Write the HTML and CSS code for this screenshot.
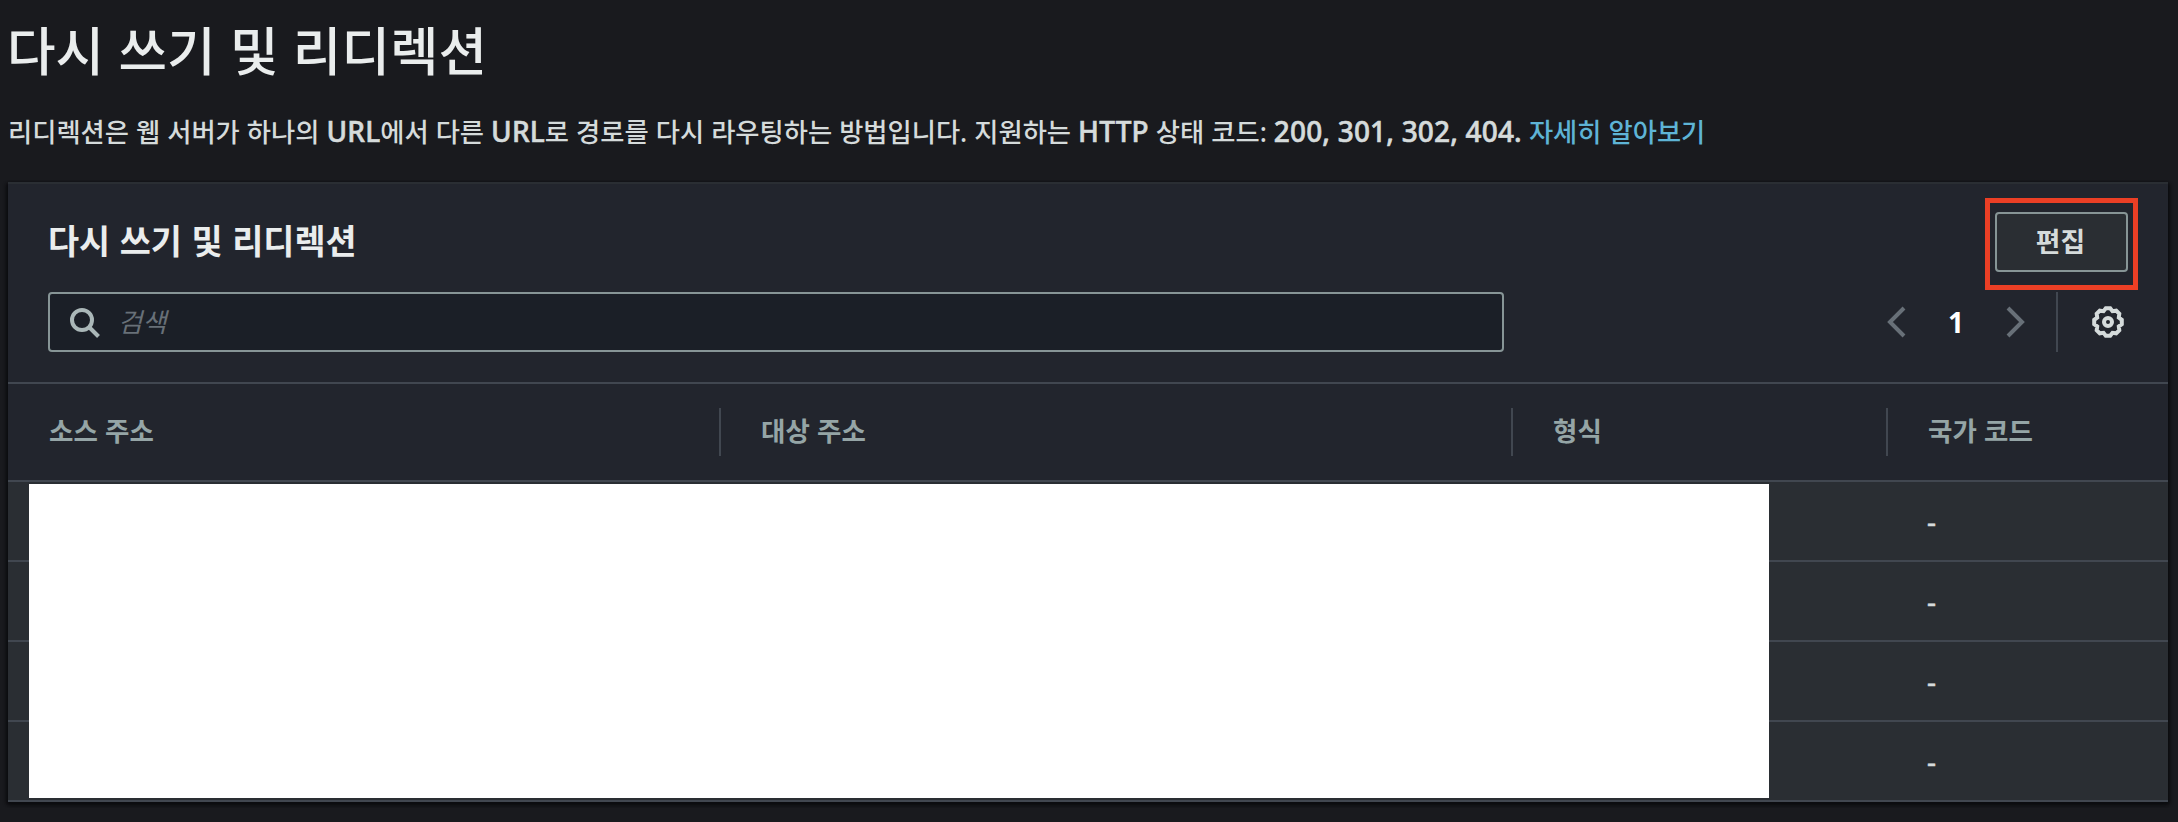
FILE: index.html
```html
<!DOCTYPE html>
<html lang="ko">
<head>
<meta charset="utf-8">
<title>다시 쓰기 및 리디렉션</title>
<link rel="stylesheet" href="styles.css">
</head>
<body>
<header class="page-header">
  <h1>다시 쓰기 및 리디렉션</h1>
  <p class="description">리디렉션은 웹 서버가 하나의 <span class="latin">URL</span>에서 다른 <span class="latin">URL</span>로 경로를 다시 라우팅하는 방법입니다. 지원하는 <span class="latin">HTTP</span> 상태 코드: <span class="latin">200, 301, 302, 404.</span> <a class="link">자세히 알아보기</a></p>
</header>
<main class="panel">
  <div class="panel-title-row">
    <h2>다시 쓰기 및 리디렉션</h2>
    <div class="action"><button class="edit">편집</button></div>
  </div>
  <div class="tools">
    <label class="search">
      <svg class="search-icon" width="30" height="32" viewBox="0 0 30 32"><circle cx="12" cy="14" r="10" /><path d="M19 21l9.500 9.500"/></svg>
      <span class="placeholder">검색</span>
    </label>
    <div class="pager">
      <svg class="chevron" width="20" height="32" viewBox="0 0 20 32"><path d="M18 2L4 16l14 14"/></svg>
      <span class="page-number">1</span>
      <svg class="chevron" width="20" height="32" viewBox="0 0 20 32"><path d="M2 2l14 14L2 30"/></svg>
      <span class="pager-line"></span>
      <svg class="gear" width="32" height="32" viewBox="0 0 32 32"><path d="M29.800 13.800V18.200L26.800 20.500L27.300 24.200L24.200 27.300L20.500 26.800L18.200 29.800H13.800L11.500 26.800L7.800 27.300L4.700 24.200L5.200 20.500L2.200 18.200V13.800L5.200 11.500L4.700 7.800L7.800 4.700L11.500 5.200L13.800 2.200H18.200L20.500 5.200L24.200 4.700L27.300 7.800L26.800 11.500Z"/><circle cx="16" cy="16" r="4"/></svg>
    </div>
  </div>
  <div class="table">
    <div class="row head"><span>소스 주소</span><span>대상 주소</span><span>형식</span><span>국가 코드</span></div>
    <div class="row"><span></span><span></span><span></span><span>-</span></div>
    <div class="row"><span></span><span></span><span></span><span>-</span></div>
    <div class="row"><span></span><span></span><span></span><span>-</span></div>
    <div class="row"><span></span><span></span><span></span><span>-</span></div>
    <div class="mask"></div>
  </div>
</main>
</body>
</html>
```
FILE: styles.css
```css
* { box-sizing: border-box; }
body {
  margin: 0;
  width: 2178px;
  height: 822px;
  overflow: hidden;
  padding: 0 10px 0 8px;
  background: #191a1e;
  color: #d5dbdb;
  font-family: "Noto Sans", "Noto Sans CJK KR", sans-serif;
}
h1, h2, p { margin: 0; font-weight: 500; white-space: nowrap; }
.page-header { height: 182px; }
h1 {
  height: 102px;
  margin-left: -1px;
  line-height: 102px;
  font-size: 52.8px;
  word-spacing: 0.6px;
  color: #eaeded;
}
.description {
  height: 60px;
  line-height: 58px;
  font-size: 26.3px;
  word-spacing: 0.2px;
}
.latin { font-size: 28px; letter-spacing: 0.15px; -webkit-text-stroke: 0.6px; }
.link { color: #5eb4d6; }
.panel {
  height: 620px;
  border-top: 2px solid #2a2e33;
  background: #22252d;
  box-shadow: 0 2px 3px #0b0c0f, 2px 2px 3px #0e0f12, -2px 2px 3px #0e0f12;
}
.panel-title-row {
  display: flex;
  justify-content: space-between;
  height: 108px;
  padding: 14px 30px 0 40px;
}
h2 {
  line-height: 86px;
  font-size: 33.8px;
  font-weight: 700;
  word-spacing: 0.8px;
  color: #eaeded;
}
.action {
  width: 153px;
  height: 92px;
  padding: 9px 5px;
  border: 5px solid #eb3f25;
}
.edit {
  display: block;
  width: 133px;
  height: 60px;
  border: 2px solid #879596;
  border-radius: 4px;
  padding: 0 2px 0 0;
  background: #2a2e33;
  color: #d5dbdb;
  font: 700 26.8px/54px "Noto Sans", "Noto Sans CJK KR", sans-serif;
}
.tools {
  display: flex;
  justify-content: space-between;
  height: 90px;
  padding: 0 44px 0 40px;
}
.search {
  display: flex;
  align-items: center;
  gap: 18px;
  width: 1456px;
  height: 60px;
  padding-left: 20px;
  border: 2px solid #879596;
  border-radius: 4px;
  background: #1b1f27;
}
.search-icon { fill: none; stroke: #aab7b8; stroke-width: 4; }
.placeholder {
  line-height: 56px;
  font-size: 26.3px;
  font-style: italic;
  color: #687078;
}
.pager { display: flex; align-items: center; height: 60px; }
.chevron { fill: none; stroke: #687078; stroke-width: 4; }
.page-number {
  width: 100px;
  text-align: center;
  font-size: 28px;
  line-height: 60px;
  font-weight: 700;
  color: #fff;
}
.pager-line { width: 2px; height: 60px; margin: 0 34px 0 30px; background: #414750; }
.gear { fill: none; stroke: #d5dbdb; stroke-width: 4; }
.table { position: relative; border-top: 2px solid #414750; }
.row {
  display: grid;
  grid-template-columns: 713px 792px 375px 1fr;
  align-items: center;
  height: 80px;
  border-bottom: 2px solid #414750;
  background: #2a2e33;
  font-size: 28px;
}
.row span { padding-left: 39px; line-height: 48px; -webkit-text-stroke: 0.6px; }
.row.head {
  height: 98px;
  background: #22252d;
  color: #95a5a6;
  font-size: 26.5px;
  font-weight: 700;
}
.head span {
  height: 48px;
  padding-left: 40px;
  line-height: 47px;
  border-right: 2px solid #414750;
  word-spacing: 0.4px;
  -webkit-text-stroke: 0;
}
.row.head span:first-child { padding-left: 41px; }
.head span:last-child { border-right: 0; }
.mask {
  position: absolute;
  left: 21px;
  top: 100px;
  width: 1740px;
  height: 314px;
  background: #fff;
}
```
